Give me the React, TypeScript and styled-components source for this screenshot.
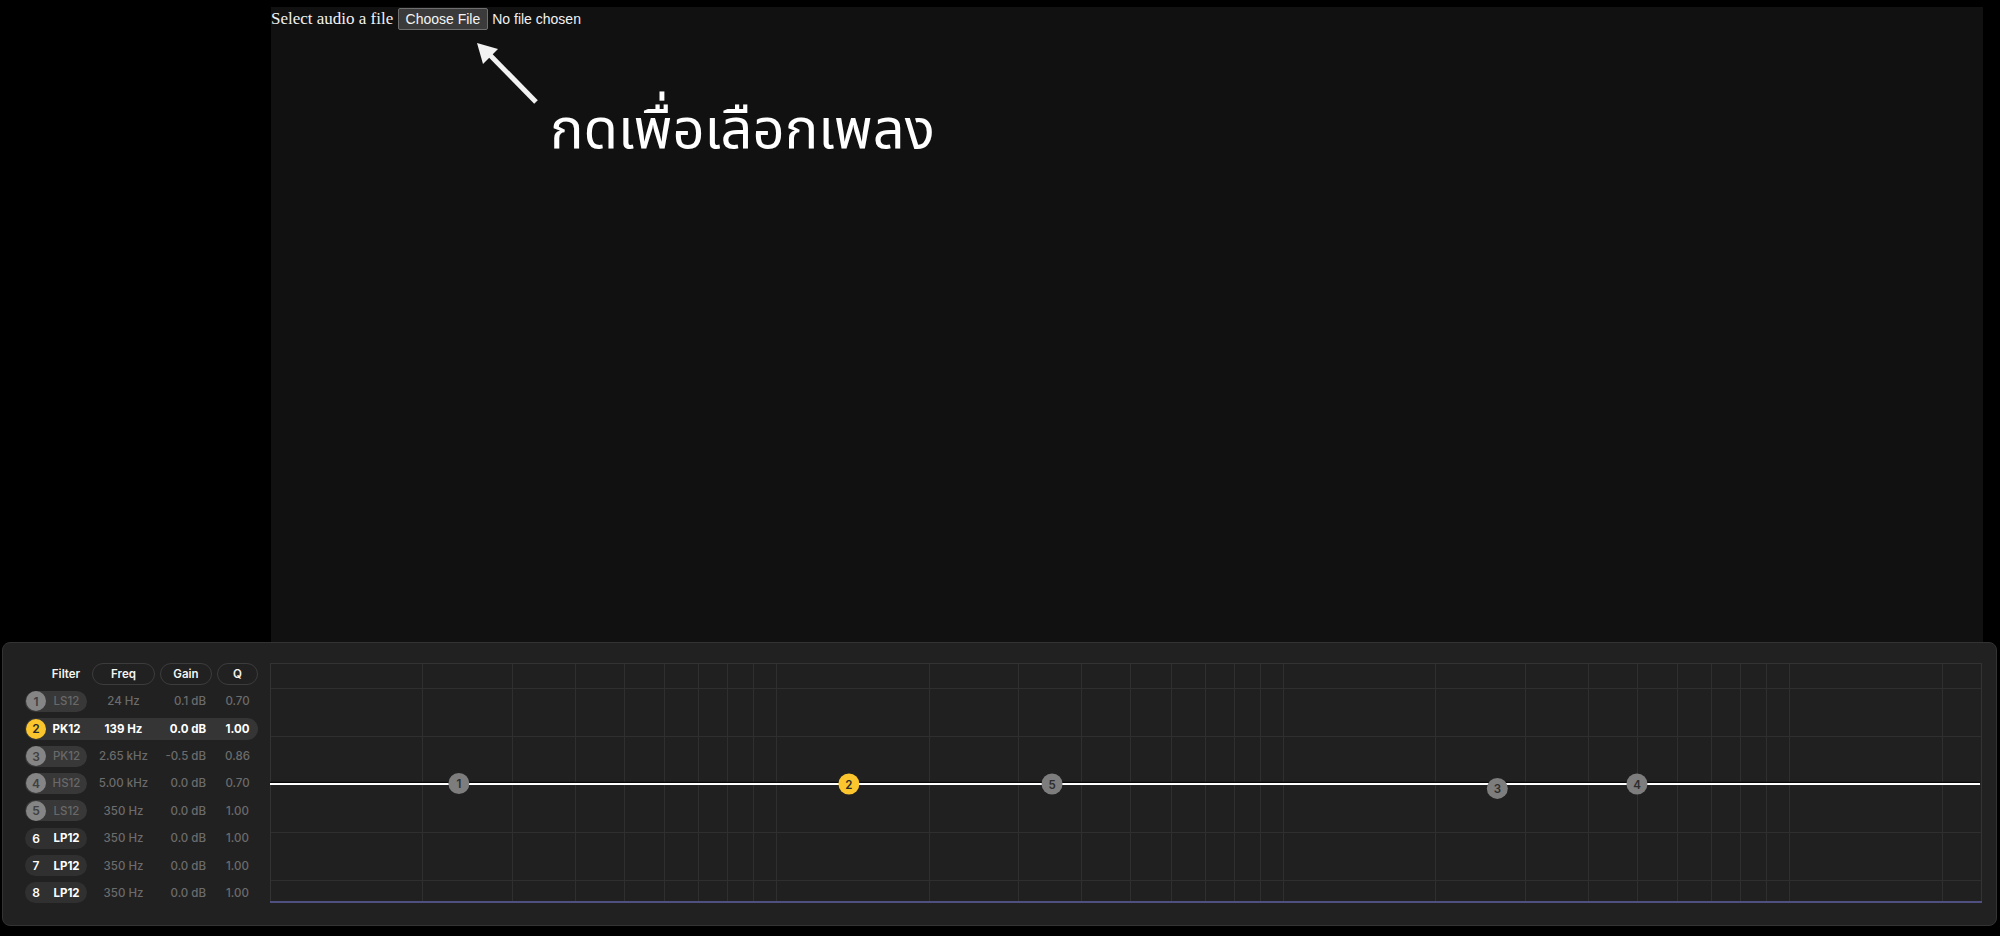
import React from "react";
import styled, { createGlobalStyle } from "styled-components";

const GlobalStyle = createGlobalStyle`
  html, body {
    margin: 0;
    padding: 0;
    background: #000;
    color-scheme: dark;
  }
  body {
    font-family: "Liberation Serif", serif;
    color: #fff;
  }
`;

type FilterState = "off" | "active" | "empty";
interface Filter {
  n: number;
  type: string;
  freq: number;
  gain: number;
  q: number;
  state: FilterState;
}

const FILTERS: Filter[] = [
  { n: 1, type: "LS12", freq: 23.6, gain: 0.1, q: 0.7, state: "off" },
  { n: 2, type: "PK12", freq: 139, gain: 0, q: 1, state: "active" },
  { n: 3, type: "PK12", freq: 2650, gain: -0.5, q: 0.86, state: "off" },
  { n: 4, type: "HS12", freq: 5000, gain: 0, q: 0.7, state: "off" },
  { n: 5, type: "LS12", freq: 350, gain: 0, q: 1, state: "off" },
  { n: 6, type: "LP12", freq: 350, gain: 0, q: 1, state: "empty" },
  { n: 7, type: "LP12", freq: 350, gain: 0, q: 1, state: "empty" },
  { n: 8, type: "LP12", freq: 350, gain: 0, q: 1, state: "empty" },
];

const fmtFreq = (f: number) =>
  f >= 1000 ? `${(f / 1000).toFixed(2)} kHz` : `${Math.round(f)} Hz`;
const fmtGain = (g: number) => `${g.toFixed(1)} dB`;

/* ---------- page ---------- */

const Page = styled.div`
  display: flex;
  flex-direction: column;
  height: 936px;
  padding-top: 7px;
  box-sizing: border-box;
`;

const StagePanel = styled.section`
  margin-left: 271px;
  width: 1712px;
  height: 635px;
  background: #111111;
  display: flex;
  flex-direction: column;
`;

const FileRow = styled.label`
  display: flex;
  align-items: center;
  height: 23px;
  font-size: 17px;
  color: #f2f2f2;
  white-space: pre;
`;

const FileInput = styled.input`
  font-family: "Liberation Sans", Arial, sans-serif;
  font-size: 14px;
  color: #f2f2f2;
  &::file-selector-button {
    font-family: "Liberation Sans", Arial, sans-serif;
    font-size: 14px;
    height: 22px;
    padding: 0 7px;
    margin-right: 4px;
    background: #3b3b3b;
    color: #f4f4f4;
    border: 1px solid #6e6e6e;
    border-radius: 2px;
  }
`;

const Annotation = styled.div`
  display: flex;
  align-items: flex-start;
  margin-top: 8px;
  margin-left: 201px;
`;

const ThaiHint = styled.div`
  font-family: "Noto Sans Thai", "Noto Sans Thai Looped", "Leelawadee UI", Tahoma, sans-serif;
  font-size: 56px;
  line-height: 1;
  color: #ffffff;
  margin-top: 65px;
  margin-left: 10px;
`;

/* ---------- EQ panel ---------- */

const EqPanel = styled.section`
  margin-left: 2px;
  width: 1995px;
  height: 284px;
  box-sizing: border-box;
  background: #212121;
  border: 1px solid #333333;
  border-radius: 8px;
  padding: 20px 14px 21px 22px;
  display: flex;
  gap: 12px;
  font-family: Inter, "Noto Sans", sans-serif;
`;

const Table = styled.div`
  width: 233px;
  display: flex;
  flex-direction: column;
  gap: 5.4px;
`;

const ROW_COLS = "62px 63px 52px 41px";

const HeaderRow = styled.div`
  display: grid;
  grid-template-columns: ${ROW_COLS};
  column-gap: 5px;
  height: 22px;
`;

const HeaderLabel = styled.div`
  display: flex;
  align-items: center;
  justify-content: center;
  padding-left: 20px;
  font-size: 11.5px;
  font-weight: 600;
  color: #f4f4f4;
`;

const HeaderPill = styled.div`
  display: flex;
  align-items: center;
  justify-content: center;
  box-sizing: border-box;
  border: 1px solid #3c3c3c;
  border-radius: 11px;
  font-size: 11.5px;
  font-weight: 600;
  color: #f4f4f4;
`;

const Row = styled.div<{ $active: boolean }>`
  display: grid;
  grid-template-columns: ${ROW_COLS};
  column-gap: 5px;
  height: 22px;
  align-items: center;
  border-radius: 11px;
  background: ${(p) => (p.$active ? "#353535" : "transparent")};
  font-size: 11.5px;
`;

const FilterPill = styled.div<{ $state: FilterState }>`
  display: flex;
  align-items: center;
  height: 21px;
  border-radius: 11px;
  background: ${(p) =>
    p.$state === "active" ? "transparent" : p.$state === "empty" ? "#303030" : "#383838"};
`;

const Badge = styled.div<{ $state: FilterState }>`
  width: 20px;
  height: 20px;
  margin-left: 1px;
  border-radius: 50%;
  display: flex;
  align-items: center;
  justify-content: center;
  font-size: 12px;
  font-weight: 600;
  background: ${(p) =>
    p.$state === "active" ? "#fbc52d" : p.$state === "empty" ? "transparent" : "#858585"};
  color: ${(p) =>
    p.$state === "active" ? "#2a2a2a" : p.$state === "empty" ? "#ffffff" : "#404040"};
`;

const TypeLabel = styled.span<{ $state: FilterState }>`
  flex: 1;
  text-align: center;
  font-size: 11.5px;
  font-weight: ${(p) => (p.$state === "off" ? 500 : 700)};
  color: ${(p) => (p.$state === "off" ? "#696969" : "#ffffff")};
`;

const Value = styled.div<{ $active: boolean; $align: "center" | "right" }>`
  text-align: ${(p) => p.$align};
  padding-right: ${(p) => (p.$align === "right" ? "6px" : "0")};
  font-weight: ${(p) => (p.$active ? 700 : 500)};
  color: ${(p) => (p.$active ? "#ffffff" : "#6c6c6c")};
`;

const GraphBox = styled.div`
  width: 1712px;
  height: 240px;
`;

/* ---------- graph ---------- */

const GW = 1712;
const GH = 240;
const FMIN = 10;
const FMAX = 24000;
const K = GW / Math.log10(FMAX / FMIN);
const Y0 = 121;
const PX_PER_DB = 4.8;
const xOf = (f: number) => K * Math.log10(f / FMIN);
const yOf = (g: number) => Y0 - g * PX_PER_DB;

const gridFreqs: number[] = [];
for (const dec of [10, 100, 1000, 10000]) {
  for (let m = 1; m <= 9; m++) {
    const f = dec * m;
    if (f > 10 && f < FMAX) gridFreqs.push(f);
  }
}
const gridGains = [20, 10, 0, -10, -20];

function EqGraph() {
  return (
    <svg width={GW} height={GH} viewBox={`0 0 ${GW} ${GH}`} style={{ display: "block" }}>
      <rect x={0} y={0} width={GW} height={GH} fill="#202020" />
      {gridFreqs.map((f) => {
        const x = Math.round(xOf(f)) + 0.5;
        return <line key={f} x1={x} x2={x} y1={0} y2={GH} stroke="#2f2f2f" strokeWidth={1} />;
      })}
      {gridGains.map((g) => {
        const y = Math.round(yOf(g)) + 0.5;
        return <line key={g} x1={0} x2={GW} y1={y} y2={y} stroke="#2f2f2f" strokeWidth={1} />;
      })}
      <rect x={0.5} y={0.5} width={GW - 1} height={GH - 1} fill="none" stroke="#333333" strokeWidth={1} />
      <line x1={0} x2={GW} y1={GH - 1} y2={GH - 1} stroke="#505080" strokeWidth={2} />
      <line x1={0} x2={GW - 2} y1={Y0 - 1.5} y2={Y0 - 1.5} stroke="#050505" strokeWidth={1.5} />
      <line x1={0} x2={GW - 2} y1={Y0} y2={Y0} stroke="#ffffff" strokeWidth={2} />
      {FILTERS.filter((f) => f.state !== "empty").map((f) => {
        const cx = xOf(f.freq);
        const cy = f.gain < 0 ? yOf(f.gain) + 2 : yOf(f.gain);
        const active = f.state === "active";
        return (
          <g key={f.n}>
            <circle cx={cx} cy={cy} r={10.5} fill={active ? "#fbc52d" : "#7d7d7d"} />
            <text
              x={cx}
              y={cy + 0.5}
              textAnchor="middle"
              dominantBaseline="central"
              fontFamily="Inter, 'Noto Sans', sans-serif"
              fontSize={11.5}
              fontWeight={600}
              fill="#2d2d2d"
            >
              {f.n}
            </text>
          </g>
        );
      })}
    </svg>
  );
}

function Arrow() {
  return (
    <svg width={68} height={68} viewBox="0 0 68 68">
      <line x1={64} y1={64} x2={14} y2={13} stroke="#f2f2f2" strokeWidth={5} />
      <polygon points="5,5 26,11 11,26" fill="#f2f2f2" />
    </svg>
  );
}

export default function App() {
  return (
    <>
      <GlobalStyle />
      <Page>
        <StagePanel>
          <FileRow>
            Select audio a file <FileInput type="file" accept="audio/*" />
          </FileRow>
          <Annotation>
            <Arrow />
            <ThaiHint>กดเพื่อเลือกเพลง</ThaiHint>
          </Annotation>
        </StagePanel>
        <EqPanel>
          <Table>
            <HeaderRow>
              <HeaderLabel>Filter</HeaderLabel>
              <HeaderPill>Freq</HeaderPill>
              <HeaderPill>Gain</HeaderPill>
              <HeaderPill>Q</HeaderPill>
            </HeaderRow>
            {FILTERS.map((f) => {
              const active = f.state === "active";
              return (
                <Row key={f.n} $active={active}>
                  <FilterPill $state={f.state}>
                    <Badge $state={f.state}>{f.n}</Badge>
                    <TypeLabel $state={f.state}>{f.type}</TypeLabel>
                  </FilterPill>
                  <Value $active={active} $align="center">
                    {fmtFreq(f.freq)}
                  </Value>
                  <Value $active={active} $align="right">
                    {fmtGain(f.gain)}
                  </Value>
                  <Value $active={active} $align="center">
                    {f.q.toFixed(2)}
                  </Value>
                </Row>
              );
            })}
          </Table>
          <GraphBox>
            <EqGraph />
          </GraphBox>
        </EqPanel>
      </Page>
    </>
  );
}
